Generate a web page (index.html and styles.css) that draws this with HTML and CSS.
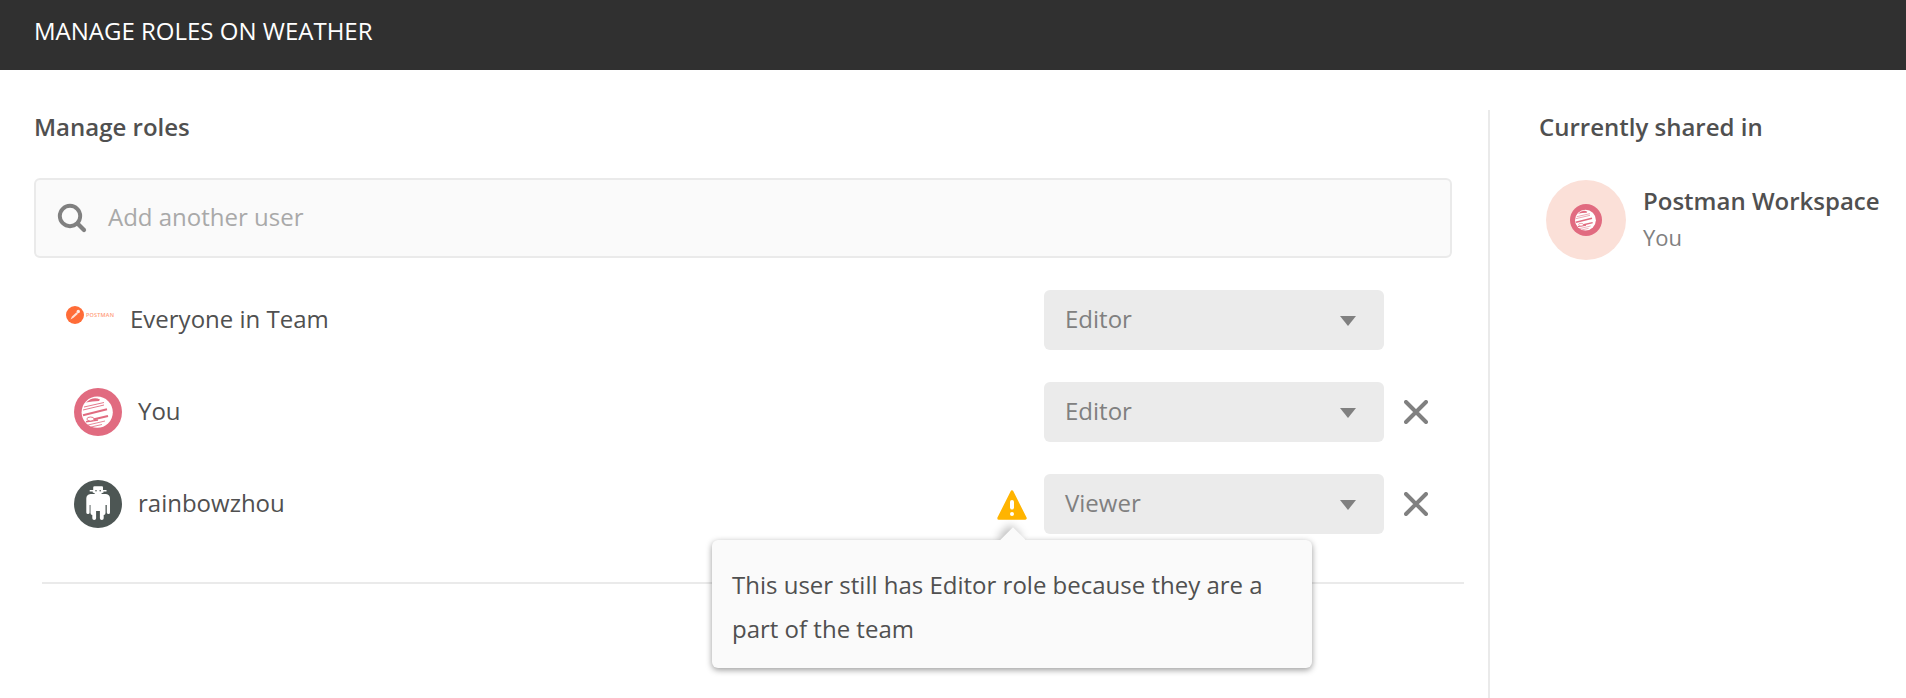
FILE: index.html
```html
<!DOCTYPE html>
<html lang="en">
<head>
<meta charset="utf-8">
<title>Manage roles</title>
<link rel="stylesheet" href="styles.css">
</head>
<body>
<svg class="defs" width="0" height="0">
  <symbol id="planet" viewBox="0 0 48 48">
    <circle cx="24" cy="24" r="24" fill="#e16b80"/>
    <circle cx="23.2" cy="24.2" r="15.6" fill="#fff"/>
    <g stroke="#e16b80" fill="none">
      <path d="M12 14.500Q19 8 26 11.500L25 13Q18 13 12 14.500Z" fill="#e16b80" stroke="none"/>
      <path d="M10 19L30 14.500" stroke-width=".9"/>
      <path d="M9 22L30 17" stroke-width=".9"/>
      <path d="M9 27.300L33 21.300" stroke-width="2.200"/>
      <path d="M19 31.500L34 28" stroke-width="2"/>
      <path d="M12 33.800L24 32" stroke-width="1.500"/>
      <ellipse cx="16.500" cy="31" rx="3.600" ry="2" fill="#fff" stroke-width=".9"/>
      <path d="M14 37L31 33" stroke-width=".8"/>
      <path d="M17 39L28 36.500" stroke-width=".8"/>
    </g>
  </symbol>
  <symbol id="cross" viewBox="0 0 24 24">
    <path d="M2 2L22 22M22 2L2 22" stroke="#808080" stroke-width="4" stroke-linecap="round"/>
  </symbol>
  <symbol id="caret" viewBox="0 0 16 10"><path d="M0 0H16L8 10Z" fill="#808080"/></symbol>
</svg>
<header class="header">MANAGE ROLES ON WEATHER</header>
<main class="content">
  <section class="roles">
    <h2 class="title">Manage roles</h2>
    <div class="search">
      <svg class="search-icon" width="30" height="30" viewBox="0 0 30 30" fill="none" stroke="#808080">
        <circle cx="13" cy="13" r="10.200" stroke-width="3.900"/>
        <path d="M20.500 20.500L27 27" stroke-width="4.200" stroke-linecap="round"/>
      </svg>
      <span class="placeholder">Add another user</span>
    </div>
    <ul class="list">
      <li class="row team">
        <svg class="team-logo" width="48" height="18" viewBox="0 0 48 18">
          <circle cx="9" cy="9" r="9" fill="#ff6c37"/>
          <path d="M4.500 13.500L6 10.500L10.500 6.200L12 7.700L7.500 11.800Z" fill="#ffe0d4"/>
          <circle cx="12.300" cy="5.500" r="1.700" fill="#ffe9e1"/>
          <text class="team-logo-text" x="20" y="11" textLength="28">POSTMAN</text>
        </svg>
        <span class="name">Everyone in Team</span>
        <div class="select"><span>Editor</span><svg width="16" height="10"><use href="#caret"/></svg></div>
      </li>
      <li class="row">
        <svg class="avatar" width="48" height="48"><use href="#planet"/></svg>
        <span class="name">You</span>
        <div class="select"><span>Editor</span><svg width="16" height="10"><use href="#caret"/></svg></div>
        <svg class="remove" width="24" height="24"><use href="#cross"/></svg>
      </li>
      <li class="row">
        <svg class="avatar" width="48" height="48" viewBox="0 0 48 48">
          <circle cx="24" cy="24" r="24" fill="#4d5654"/>
          <path fill="#fff" d="M20.500 6.300H28Q29 6.300 29 7.500V10H32.500V11.500H29.500V12.500L27.500 13.300V14H32Q36 14.500 36 18.500V32.500Q36 34 34.500 34T32.800 32.500V25H31.500V33Q31.500 35 29.700 35V38.200Q29.700 40 27.800 40T25.900 38.200V31H22.100V38.200Q22.100 40 20.200 40T18.300 38.200V35Q16.500 35 16.500 33V25H15.600V32.500Q15.600 34 14 34T12.300 32.500V18.500Q12.300 14.500 16.500 14H20.700V13.300L18.700 12.500V11.500H15.700V10H19.200V7.500Q19.200 6.300 20.500 6.300Z"/>
          <circle cx="22" cy="10.800" r=".8" fill="#4d5654"/><circle cx="26.200" cy="10.800" r=".8" fill="#4d5654"/>
        </svg>
        <span class="name">rainbowzhou</span>
        <div class="warning">
          <svg width="30" height="30" viewBox="0 0 30 30">
            <path d="M15 1.900L28.200 28.200H1.800Z" fill="#ffb400" stroke="#ffb400" stroke-width="3" stroke-linejoin="round"/>
            <path d="M15 12V17.500" stroke="#fff" stroke-width="4" stroke-linecap="round"/>
            <circle cx="15" cy="24" r="2" fill="#fff"/>
          </svg>
          <div class="tooltip">This user still has Editor role because they are a part of the team</div>
        </div>
        <div class="select"><span>Viewer</span><svg width="16" height="10"><use href="#caret"/></svg></div>
        <svg class="remove" width="24" height="24"><use href="#cross"/></svg>
      </li>
    </ul>
  </section>
  <aside class="shared">
    <h2 class="title">Currently shared in</h2>
    <div class="workspace">
      <div class="workspace-icon"><svg width="32" height="32"><use href="#planet"/></svg></div>
      <div class="workspace-text">
        <div class="workspace-name">Postman Workspace</div>
        <div class="workspace-owner">You</div>
      </div>
    </div>
  </aside>
</main>
</body>
</html>
```
FILE: styles.css
```css
* { box-sizing: border-box; }
body {
  margin: 0;
  height: 698px;
  overflow: hidden;
  display: flex;
  flex-direction: column;
  background: #fff;
  color: #505050;
  font: 24px/32px "Open Sans", sans-serif;
}
svg { display: block; flex: none; }
.defs { position: absolute; }
.header {
  height: 70px;
  flex: none;
  padding: 15px 34px;
  background: #303030;
  color: #fff;
}
.content {
  flex: 1;
  display: flex;
  padding: 40px 0 0 34px;
}
.roles { width: 1454px; flex: none; }
.title {
  margin: 0;
  font-size: 24px;
  line-height: 34px;
  font-weight: 600;
}
.search {
  width: 1418px;
  height: 80px;
  margin-top: 34px;
  padding: 0 21px;
  display: flex;
  align-items: center;
  gap: 21px;
  border: 2px solid #eaeaea;
  border-radius: 6px;
  background: #fafafa;
}
.placeholder { color: #a9a9a9; padding-bottom: 2px; }
.list {
  list-style: none;
  width: 1422px;
  height: 326px;
  margin: 0 0 0 8px;
  padding: 32px 36px 0 32px;
  display: flex;
  flex-direction: column;
  gap: 32px;
  border-bottom: 2px solid #eaeaea;
}
.row {
  height: 60px;
  display: flex;
  align-items: center;
}
.team { padding-right: 44px; margin-left: -8px; }
.team-logo { margin-bottom: 10px; }
.team-logo-text { font: 600 5.500px "Open Sans", sans-serif; fill: #ff9d7a; }
.name { margin-left: 16px; padding-bottom: 2px; flex: 1; }
.select {
  width: 340px;
  height: 60px;
  padding: 0 28px 0 21px;
  display: flex;
  align-items: center;
  justify-content: space-between;
  border-radius: 6px;
  background: #ebebeb;
  color: #808080;
}
.select span { padding-bottom: 2px; }
.select svg { margin-top: 2px; }
.remove { margin-left: 20px; }
.warning { position: relative; margin: 2px 17px 0 0; }
.tooltip {
  position: absolute;
  left: -285px;
  top: 50px;
  width: 600px;
  height: 128px;
  padding: 23px 20px 17px;
  line-height: 44px;
  border-radius: 6px;
  background: #fafafa;
  box-shadow: 0 2px 6px rgba(0, 0, 0, .4);
}
.tooltip::before {
  content: "";
  position: absolute;
  left: 292px;
  top: -9px;
  width: 18px;
  height: 18px;
  transform: rotate(45deg);
  background: #fafafa;
  box-shadow: -4px 0 8px rgba(0, 0, 0, .25);
  clip-path: polygon(-16px -16px, 18px -16px, 18px 0, 0 18px, -16px 34px);
}
.shared {
  flex: 1;
  padding-left: 49px;
  border-left: 2px solid #eaeaea;
}
.workspace {
  display: flex;
  align-items: center;
  gap: 17px;
  margin: 36px 0 0 7px;
  white-space: nowrap;
}
.workspace-icon {
  width: 80px;
  height: 80px;
  flex: none;
  display: flex;
  align-items: center;
  justify-content: center;
  border-radius: 50%;
  background: #fbe0d8;
}
.workspace-text { padding-bottom: 2px; }
.workspace-name { font-weight: 600; line-height: 36px; }
.workspace-owner { font-size: 22px; line-height: 36px; color: #808080; }
```
